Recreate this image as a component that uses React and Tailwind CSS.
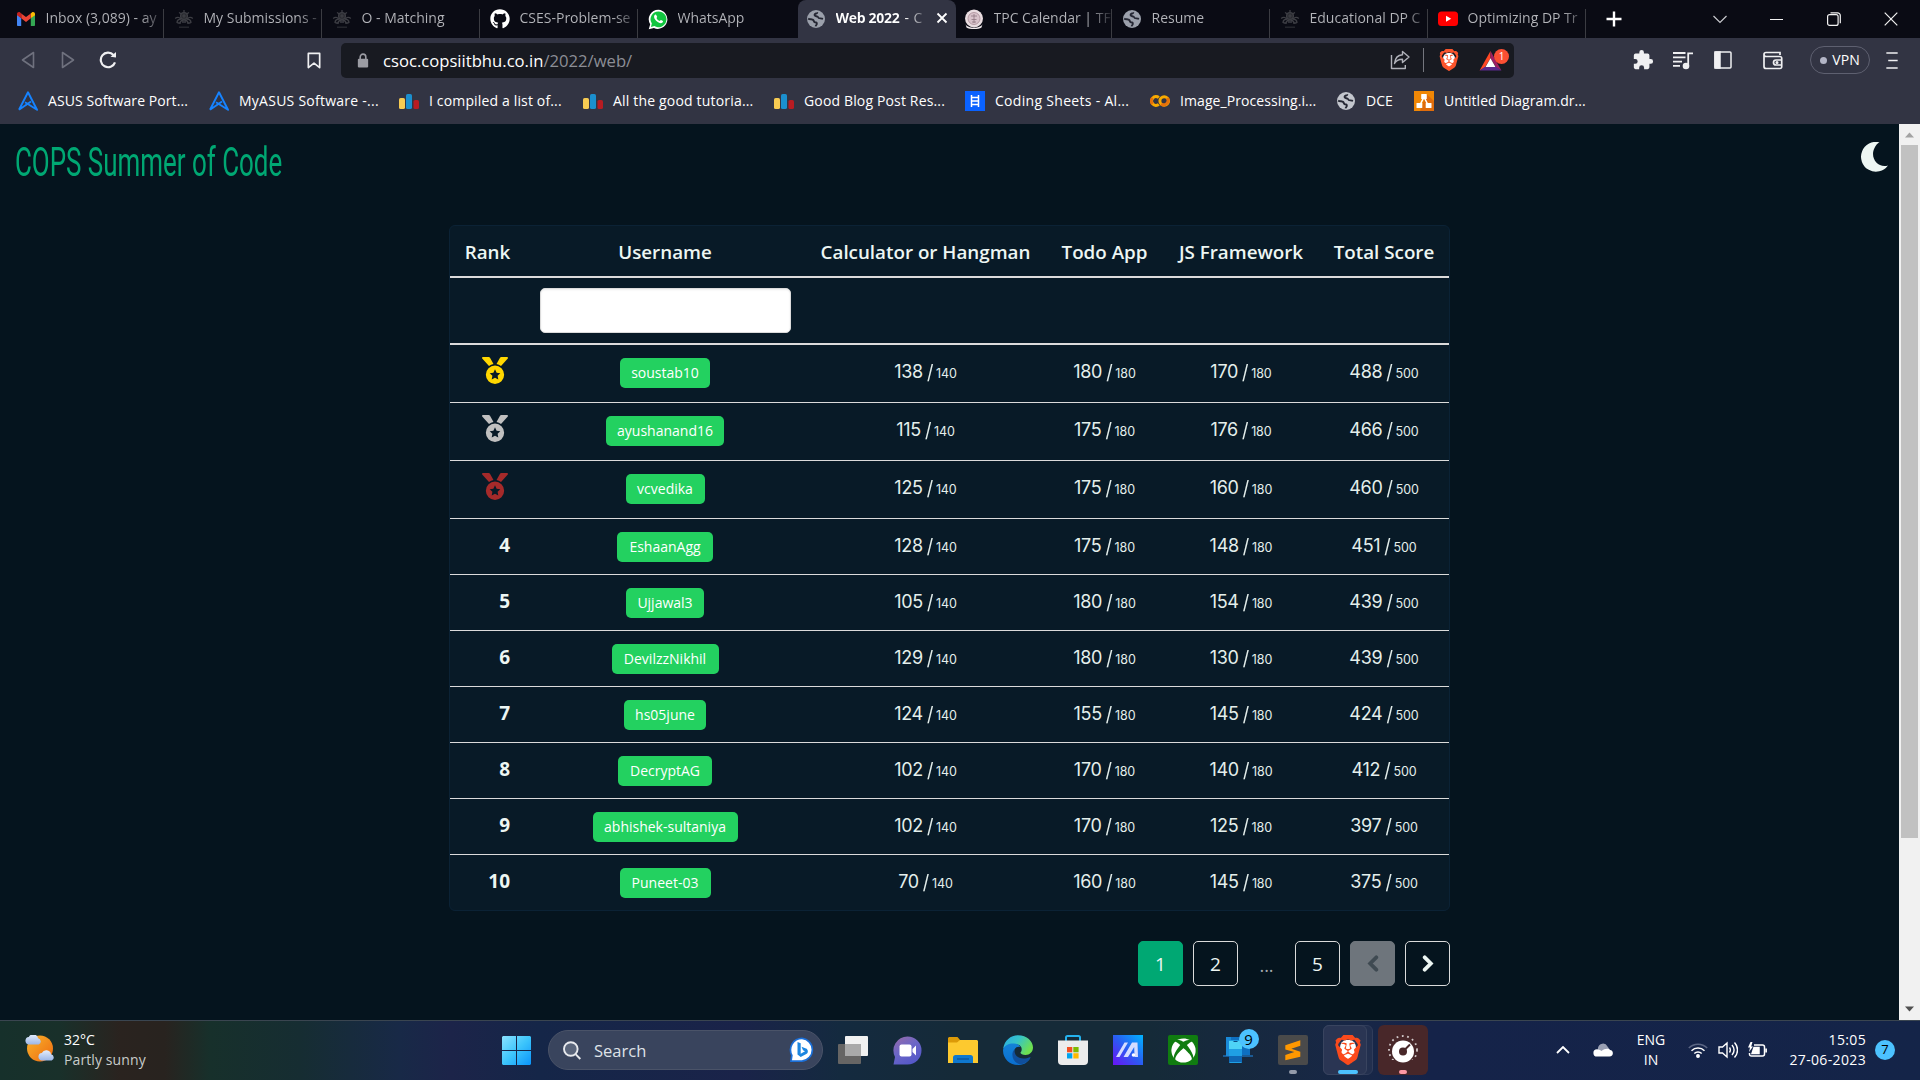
import React from "react";
import { FaGithub, FaXbox } from "react-icons/fa";
import { SiBrave } from "react-icons/si";

const Globe = ({ className = "text-[#9ba0ab]" }) => (
  <svg viewBox="0 0 20 20" className={"size-5 " + className}>
    <circle cx="10" cy="10" r="9" fill="currentColor" />
    <path d="M2.200 9.500c1.500 1.500 3 .3 4.500 1.200 1.600.9.800 2.300 2.300 2.600 1.500.2 2 .4 1.800 1.700-.1.900-1 1.200-1.200 2.400M11.300 3.200c.3 1.600-2.800 1-2.800 2.800 0 1.700 3.300.7 3.700 2.400.3 1.400 2.500.6 4.800 1.400" fill="none" stroke="#252733" strokeWidth="1.900" />
  </svg>
);

const Crest = () => (
  <svg viewBox="0 0 20 20" className="size-5" fill="none" stroke="#3d3e44" strokeWidth="1.300">
    <circle cx="10" cy="7" r="3.400" fill="#2a2b31" />
    <circle cx="10" cy="7" r="1" />
    <path d="M10 1v3M5 3.500l2.500 1.500M15 3.500l-2.500 1.500M1.200 9.500c2-1.800 4-1.200 5.200.3M18.800 9.500c-2-1.800-4-1.200-5.200.3M3 14c0-3 2-4 4.500-4M17 14c0-3-2-4-4.500-4M6 15c0-3 2-4 4-4s4 1 4 4M3.500 14h3M13.500 14h3M8 13h4" />
    <path d="M5 18.200h10" stroke="#2a2b31" />
  </svg>
);

const Gmail = () => (
  <svg viewBox="0 0 20 20" className="size-5">
    <path d="M1 5v11c0 .6.500 1 1 1h3.200V9z" fill="#4285f4" />
    <path d="M19 5v11c0 .6-.5 1-1 1h-3.200V9z" fill="#34a853" />
    <path d="M14.800 4.600V9.300L19 6.200V5c0-1.800-1.900-2.600-3.200-1.500z" fill="#fbbc04" />
    <path d="M5.200 9.300V4.500L10 8.100l4.800-3.600v4.800L10 12.900z" fill="#ea4335" />
    <path d="M1 5v1.200l4.200 3.100V4.600L4.200 3.500C2.900 2.400 1 3.200 1 5z" fill="#c5221f" />
  </svg>
);

const WhatsApp = () => (
  <svg viewBox="0 0 22 22" className="size-[21px]">
    <path d="M11 .8A10 10 0 0 0 2.300 16L.8 21.300l5.400-1.400A10 10 0 1 0 11 .8z" fill="#fff" />
    <path d="M11 2.500a8.300 8.300 0 0 0-7 12.800l-.9 3.500 3.600-.9A8.300 8.300 0 1 0 11 2.500z" fill="#12c640" />
    <path d="M8.600 6.300c-.4-.8-1.100-.6-1.600 0-1.800 2.200.6 5.200 2.200 6.600 1.800 1.600 4.400 2.900 6 1.300.9-1 .6-1.400 0-1.800l-1.600-.8c-.5-.2-.9 1-1.400.9-1.400-.4-2.700-1.700-3.200-2.900-.2-.5.800-1 .6-1.500z" fill="#fff" />
  </svg>
);

const Seal = () => (
  <svg viewBox="0 0 20 20" className="size-5">
    <circle cx="10" cy="9.500" r="9" fill="#e9dce0" />
    <circle cx="10" cy="9.500" r="6" fill="#d8c2ca" stroke="#a98d97" strokeWidth=".8" />
    <path d="M10 5v9M7 7h6M7.500 10.500h5M8 13h4" stroke="#8f7682" strokeWidth=".8" />
    <path d="M1.500 15c2 5 15 5 17 0l-1 3.500c-3 2-12 2-15 0z" fill="#f4ecef" />
  </svg>
);

const YouTube = () => (
  <svg viewBox="0 0 20 20" className="size-5">
    <rect x="0" y="2.500" width="20" height="14.500" rx="3.500" fill="#f00" />
    <path d="M8 6.700v6l5.200-3z" fill="#fff" />
  </svg>
);

const tabs = [
  { icon: <Gmail />, text: "Inbox (3,089) - ay" },
  { icon: <Crest />, text: "My Submissions -" },
  { icon: <Crest />, text: "O - Matching" },
  { icon: <FaGithub className="size-5 text-white" />, text: "CSES-Problem-se" },
  { icon: <WhatsApp />, text: "WhatsApp" },
  { icon: <Globe />, text: "Web 2022", rest: "- C", active: true },
  { icon: <Seal />, text: "TPC Calendar | TF" },
  { icon: <Globe />, text: "Resume" },
  { icon: <Crest />, text: "Educational DP C" },
  { icon: <YouTube />, text: "Optimizing DP Tr" },
];

const Asus = () => (
  <svg viewBox="0 0 20 20" className="size-5" fill="none" stroke="#1683ff" strokeWidth="1.900" strokeLinejoin="round">
    <path d="M1 18.800 10 1.300l9 17.500-12-7.600M1 18.800l12-8.300" />
  </svg>
);
const Bars = () => (
  <svg viewBox="0 0 20 20" className="size-5">
    <rect x="0" y="7" width="6" height="11" rx="1.600" fill="#f7cb52" />
    <rect x="7" y="3" width="6" height="15" rx="1.600" fill="#1b8fce" />
    <rect x="14.500" y="9" width="5.500" height="9" rx="1.600" fill="#b71c22" />
  </svg>
);
const Ladder = () => (
  <svg viewBox="0 0 20 20" className="size-5">
    <path d="M0 0h20v20H0z" fill="#0a62ff" />
    <path d="M6.500 4v12M13.500 4v12M6.500 6.500h7M6.500 10h7M6.500 13.500h7" stroke="#fff" strokeWidth="1.500" />
  </svg>
);
const Colab = () => (
  <svg viewBox="0 0 20 20" className="size-5" fill="none" strokeWidth="3">
    <path d="M8.800 6.600a4.400 4.400 0 1 0 0 6.800" stroke="#f9ab00" />
    <circle cx="14.200" cy="10" r="4.300" stroke="#f9ab00" />
    <path d="M11.200 13a4.300 4.300 0 0 0 6-6" stroke="#e8710a" />
    <path d="M2.600 7a4.300 4.300 0 0 0 0 6" stroke="#e8710a" />
  </svg>
);
const Drawio = () => (
  <svg viewBox="0 0 20 20" className="size-5">
    <path d="M0 0h20v20H0z" fill="#f08705" />
    <path d="M12.500 3 20 10v10H6z" fill="#df6c0c" />
    <path d="m10 6-4 8M10 6l4 8" stroke="#fff" strokeWidth="1.600" />
    <rect x="7.200" y="3" width="5.600" height="5" rx=".6" fill="#fff" />
    <rect x="2.500" y="12" width="5.800" height="5" rx=".6" fill="#fff" />
    <rect x="11.700" y="12" width="5.800" height="5" rx=".6" fill="#fff" />
  </svg>
);

/* Orange shield with a white face behind the lion's cut-outs. */
const Brave = ({ small }) => (
  <span className={"relative flex items-center justify-center " + (small ? "size-[22px]" : "size-[30px]")}>
    <span className={"absolute rounded-[40%] bg-white " + (small ? "h-3.5 w-3" : "h-5 w-4")} />
    <SiBrave className={"relative " + (small ? "size-[22px] text-[#fb542b]" : "size-[30px] text-[#fb4a1c]")} />
  </span>
);

const bookmarks = [
  { icon: <Asus />, text: "ASUS Software Port...", w: "w-[191px] tracking-[0.08px]" },
  { icon: <Asus />, text: "MyASUS Software -...", w: "w-[190px] tracking-[0.25px]" },
  { icon: <Bars />, text: "I compiled a list of...", w: "w-[184px] tracking-[0.15px]" },
  { icon: <Bars />, text: "All the good tutoria...", w: "w-[191px] tracking-[0.18px]" },
  { icon: <Bars />, text: "Good Blog Post Res...", w: "w-[191px] tracking-[0.15px]" },
  { icon: <Ladder />, text: "Coding Sheets - Al...", w: "w-[185px] tracking-[0.3px]" },
  { icon: <Colab />, text: "Image_Processing.i...", w: "w-[186px] tracking-[0.08px]" },
  { icon: <Globe className="text-[#c3c6cd]" />, text: "DCE", w: "w-[78px]" },
  { icon: <Drawio />, text: "Untitled Diagram.dr...", w: "w-[180px] tracking-[0.06px]" },
];

function TabBar() {
  return (
    <div className="flex h-[38px] items-end bg-[#0a0b14] pl-2">
      {tabs.map((t, i) => (
        <div
          key={i}
          className={
            "relative flex h-[38px] w-[158px] shrink-0 items-center pb-0.5 pl-2 " +
            (t.active ? "rounded-t-lg bg-[#323443]" : "")
          }
        >
          <span className="flex w-[29.500px] shrink-0 pt-0.5">{t.icon}</span>
          <span
            className={
              "whitespace-nowrap text-[14px] leading-5 " +
              (t.active
                ? "w-[94px] bg-linear-to-r from-white from-75% to-transparent bg-clip-text font-bold tracking-[-0.3px] text-transparent"
                : "w-[118px] bg-linear-to-r from-[#b4b5ba] from-80% to-[#b4b5ba]/10 bg-clip-text text-transparent")
            }
          >
            {t.text}
            {t.rest && <span className="ml-[5px] font-normal tracking-[0.5px]">{t.rest}</span>}
          </span>
          {t.active && (
            <svg viewBox="0 0 12 12" className="ml-1.5 size-3 shrink-0" stroke="#fff" strokeWidth="1.800">
              <path d="m1.500 1.500 9 9m0-9-9 9" />
            </svg>
          )}
          {i !== 4 && i !== 5 && <span className="absolute right-0.5 bottom-0 h-[29px] w-px bg-[#3b3c42]" />}
        </div>
      ))}
      <div className="flex h-[38px] flex-1 items-center">
        <svg viewBox="0 0 16 16" className="ml-[18px] size-4" stroke="#fff" strokeWidth="2.400">
          <path d="M8 .5v15M.5 8h15" />
        </svg>
        <svg viewBox="0 0 14 14" className="ml-[91px] size-3.5" fill="none" stroke="#c9cace" strokeWidth="1.200">
          <path d="m.5 4 6.500 6.500L13.500 4" />
        </svg>
        <span className="ml-[43px] h-px w-[13px] bg-[#f2f2f2]" />
        <svg viewBox="0 0 14 14" className="ml-11 size-3.5" fill="none" stroke="#f2f2f2" strokeWidth="1.200">
          <rect x=".6" y="2.600" width="10.500" height="10.800" rx="2" />
          <path d="M3.500.8h7a2.800 2.800 0 0 1 2.800 2.800v7.600" />
        </svg>
        <svg viewBox="0 0 14 14" className="ml-[43px] size-3.5" fill="none" stroke="#f2f2f2" strokeWidth="1.200">
          <path d="m.7.7 12.600 12.600m0-12.600L.7 13.300" />
        </svg>
      </div>
    </div>
  );
}

function Toolbar() {
  return (
    <div className="flex h-[44px] items-center">
      <svg viewBox="0 0 14 18" className="ml-[21px] h-[18px] w-3.5" fill="none" stroke="#6f717e" strokeWidth="1.600" strokeLinejoin="round">
        <path d="M12.500 1.500v15L1.500 9z" />
      </svg>
      <svg viewBox="0 0 14 18" className="ml-[26px] h-[18px] w-3.5" fill="none" stroke="#6f717e" strokeWidth="1.600" strokeLinejoin="round">
        <path d="M1.500 1.500v15l11-7.500z" />
      </svg>
      <svg viewBox="0 0 18 18" className="ml-[24px] size-[18px]" fill="none" stroke="#f0f0f2" strokeWidth="2.200">
        <path d="M16 11.300A7.300 7.300 0 1 1 14.500 4" />
        <path d="M11.500 5.800 17 6.500V1z" fill="#f0f0f2" stroke="none" />
      </svg>
      <svg viewBox="0 0 14 18" className="ml-[190px] h-[17px] w-3.5" fill="none" stroke="#f0f0f2" strokeWidth="1.800" strokeLinejoin="round">
        <path d="M1 1.500h12v15l-6-4.800-6 4.800z" />
      </svg>
      <div className="ml-5 flex h-[35px] w-[1173px] items-center rounded-[5px] bg-[#181a21]">
        <svg viewBox="0 0 12 16" className="ml-4 h-[15px] w-[12px]">
          <rect x=".5" y="6" width="11" height="9.500" rx="1.200" fill="#9b9ca3" />
          <path d="M3 6.500V4.200a3 3 0 0 1 6 0v2.300" fill="none" stroke="#9b9ca3" strokeWidth="1.700" />
        </svg>
        <span className="ml-3.5 w-[1007px] pt-0.5 text-[16.650px] whitespace-nowrap text-[#8c8e96]">
          <span className="text-white">csoc.copsiitbhu.co.in</span>/2022/web/
        </span>
        <svg viewBox="0 0 20 20" className="size-5" fill="none" stroke="#b0b2ba" strokeWidth="1.400" strokeLinejoin="round">
          <path d="M1.500 5v13.500h13.800V15" />
          <path d="M12.500 1.500 19 7l-6.500 5.500V9.300C8.500 9.300 6 10.500 4.500 13.500 5 8.500 8 5 12.500 4.700z" />
        </svg>
        <span className="mr-3.5 ml-[13px] h-6 w-px bg-[#74767e]" />
        <Brave small />
        <div className="relative ml-[19px] flex h-[22px] w-6 items-end">
          <svg viewBox="0 0 24 22" className="h-[20px] w-[23px]">
            <path d="M12 0 0 21.500l5.500-3L12 8z" fill="#ff4724" />
            <path d="m12 0 12 21.500-5.500-3L12 8z" fill="#9e1f63" />
            <path d="M0 21.500h24l-5.500-4h-13z" fill="#5b2a8c" />
            <path d="m12 8 5.500 9.500h-11z" fill="#fff" />
          </svg>
          <span className="absolute top-0 left-[15px] flex size-[15px] items-center justify-center rounded-full bg-[#fb4f33] text-[10px] text-white">1</span>
        </div>
      </div>
      <svg viewBox="0 0 24 24" className="ml-[118px] size-[22px]" fill="#f0f0f2">
        <path d="M20.500 11H19V7a2 2 0 0 0-2-2h-4V3.500a2.500 2.500 0 0 0-5 0V5H4a2 2 0 0 0-2 2v3.800h1.500a2.700 2.700 0 0 1 0 5.400H2V20c0 1.100.9 2 2 2h3.800v-1.500a2.700 2.700 0 0 1 5.400 0V22H17a2 2 0 0 0 2-2v-4h1.500a2.500 2.500 0 0 0 0-5z" />
      </svg>
      <svg viewBox="0 0 20 18" className="ml-[19px] h-[19px] w-5" fill="none" stroke="#f0f0f2" strokeWidth="1.800">
        <path d="M0 1.500h12.500M0 5.800h12.500M0 10.100h9M0 14.400h7M15.200 15V1.800H20" />
        <circle cx="13" cy="14.500" r="2.400" fill="#f0f0f2" />
      </svg>
      <svg viewBox="0 0 18 18" className="ml-[21px] size-[18px]" fill="none" stroke="#f0f0f2" strokeWidth="1.500">
        <rect x="1" y="1" width="16" height="16" rx="1" />
        <path d="M1 1h5v16H1z" fill="#f0f0f2" />
      </svg>
      <svg viewBox="0 0 20 18" className="ml-[31px] h-[19px] w-5" fill="none" stroke="#f0f0f2" strokeWidth="1.700">
        <path d="M17 3.500V1H3a2 2 0 0 0 0 4h14a1.700 1.700 0 0 1 1.700 1.700v8.500A1.700 1.700 0 0 1 17 17H3a2 2 0 0 1-2-2V3M19 8.500h-6a2.500 2.500 0 0 0 0 5h6" />
        <circle cx="14" cy="11" r=".7" fill="#f0f0f2" />
      </svg>
      <div className="ml-[27px] flex h-7 w-[60px] items-center justify-center gap-[5px] rounded-full border border-[#5e6070] text-[14px] text-white">
        <span className="size-[7px] rounded-full bg-[#b3b5c6]" />
        <span className="pb-px tracking-[0.1px]">VPN</span>
      </div>
      <svg viewBox="0 0 12 18" className="ml-[16px] h-[17px] w-3" stroke="#f0f0f2" strokeWidth="1.700">
        <path d="M0 1h12M2 9h10M0 17h12" />
      </svg>
    </div>
  );
}

function Bookmarks() {
  return (
    <div className="flex h-[38px] items-center pl-[18px] text-[14px] text-white">
      {bookmarks.map((b, i) => (
        <div key={i} className={"flex items-center gap-2.5 whitespace-nowrap " + b.w}>
          {b.icon}
          <span className="pb-0.5">{b.text}</span>
        </div>
      ))}
    </div>
  );
}

const Medal = ({ color }) => (
  <svg viewBox="0 0 26 27" className={"h-[27px] w-[26px] " + color} fill="currentColor">
    <path d="M0 .9C0 .3.300 0 .9 0h5.800c.6 0 1 .2 1.300.7l3.500 6.200c-1.700.4-3.200 1.100-4.500 2.200L.2 1.500zM26 .9c0-.6-.3-.9-.9-.9h-5.800c-.6 0-1 .2-1.300.7l-3.500 6.200c1.700.4 3.200 1.100 4.500 2.200l6.800-7.600z" />
    <path fillRule="evenodd" d="M13 8.600a9.100 9.100 0 1 0 0 18.300 9.100 9.100 0 0 0 0-18.300zm0 3.700 1.600 3.400 3.700.5-2.700 2.600.7 3.700-3.300-1.800-3.300 1.800.7-3.700-2.700-2.600 3.700-.5z" />
  </svg>
);

const rows = [
  ["text-[#ffd700]", "soustab10", "w-[90px]", 138, 180, 170, 488],
  ["text-[#c0c0c0]", "ayushanand16", "w-[118px]", 115, 175, 176, 466],
  ["text-[#a52a2a]", "vcvedika", "w-[79px]", 125, 175, 160, 460],
  [4, "EshaanAgg", "w-[96px]", 128, 175, 148, 451],
  [5, "Ujjawal3", "w-[78px]", 105, 180, 154, 439],
  [6, "DevilzzNikhil", "w-[107px]", 129, 180, 130, 439],
  [7, "hs05june", "w-[82px]", 124, 155, 145, 424],
  [8, "DecryptAG", "w-[94px]", 102, 170, 140, 412],
  [9, "abhishek-sultaniya", "w-[145px]", 102, 170, 125, 397],
  [10, "Puneet-03", "w-[91px]", 70, 160, 145, 375],
];

const cols = "grid grid-cols-[75px_280px_241px_117px_156px_130px]";

const Score = ({ value, max }) => (
  <div className="pt-3 text-center font-['Inter'] text-[18px] leading-[30px] tracking-[-0.3px] whitespace-nowrap text-[#e4efec]">
    {value}
    <span className="ml-1 mr-[3px] inline-block scale-y-110">/</span>
    <span className="text-[12.500px] tracking-[-0.1px]">{max}</span>
  </div>
);

function Board() {
  return (
    <div className="w-[1001px] rounded-[6px] border border-[#0b2235] bg-[#081a27]">
      <div className={cols + " h-[52px] border-b-2 border-[#dbdbdb] text-center text-[18.800px] leading-[53px] font-semibold whitespace-nowrap text-[#edf6f3]"}>
        {["Rank", "Username", "Calculator or Hangman", "Todo App", "JS Framework", "Total Score"].map((h) => (
          <div key={h} className="h-[50px]">{h}</div>
        ))}
      </div>
      <div className={cols + " h-[67px] border-b-2 border-[#dbdbdb]"}>
        <div />
        <input className="mt-[10px] ml-[15px] h-[45px] w-[251px] rounded-[5px] border border-[#dbdbdb] bg-white shadow-[inset_0_1px_2px_rgba(10,10,10,0.08)]" />
      </div>
      {rows.map(([rank, name, w, a, b, c, d], i) => (
        <div
          key={name}
          className={cols + " " + (i < 3 ? "h-[58px]" : i < 9 ? "h-[56px]" : "h-[55px]") + (i < 9 ? " border-b border-[#dbdbdb]" : "")}
        >
          {i < 3 ? (
            <div className="pt-3 pl-[32px]"><Medal color={rank} /></div>
          ) : (
            <div className="pt-[11px] pr-[15px] text-right text-[19px] leading-[30px] font-bold text-[#edf6f3]">{rank}</div>
          )}
          <div className="flex justify-center pt-[13px]">
            <span className={"flex h-[30px] items-center justify-center rounded-[5px] bg-[#23d160] pb-0.5 text-[14px] text-white " + w}>{name}</span>
          </div>
          <Score value={a} max={140} />
          <Score value={b} max={180} />
          <Score value={c} max={180} />
          <Score value={d} max={500} />
        </div>
      ))}
    </div>
  );
}

function Pager() {
  const box = "flex size-[45px] items-center justify-center rounded-[5px] border text-[19px] ";
  return (
    <div className="mt-[30px] flex w-[1001px] justify-end gap-2.5 text-[#edf6f3]">
      <div className={box + "border-[#00a873] bg-[#00a873] pt-0.5"}>1</div>
      <div className={box + "border-[#dbdbdb] pt-0.5"}>2</div>
      <div className="flex w-[37px] items-center justify-center pt-1 text-[18px] text-[#a3a8ab]">...</div>
      <div className={box + "border-[#dbdbdb] pt-0.5"}>5</div>
      <div className={box + "border-[#6e757c] bg-[#6e757c]"}>
        <svg viewBox="0 0 12 18" className="h-[17px] w-3" fill="none" stroke="#3f4a52" strokeWidth="4" strokeLinecap="round">
          <path d="M9.500 2.500 3 9l6.500 6.500" />
        </svg>
      </div>
      <div className={box + "border-[#dbdbdb]"}>
        <svg viewBox="0 0 12 18" className="h-[17px] w-3" fill="none" stroke="#edf6f3" strokeWidth="4" strokeLinecap="round">
          <path d="M2.500 2.500 9 9l-6.500 6.500" />
        </svg>
      </div>
    </div>
  );
}

function Page() {
  return (
    <div className="flex h-[896px] bg-[#05141e]">
      <div className="flex flex-1 flex-col items-center">
        <div className="flex h-[101px] w-full shrink-0 items-start justify-between pr-[11px] pl-[15px]">
          <h1 className="h-[60px] w-[266px] whitespace-nowrap">
            <span className="inline-block origin-left scale-x-[0.648] pt-[15px] font-['Roboto'] text-[40px] leading-[48px] text-[#00a873]">COPS Summer of Code</span>
          </h1>
          <svg viewBox="0 0 27 30" className="mt-[18px] h-[30px] w-[27px]" fill="#edf6f3">
            <path d="M18.500.3A14.900 14.900 0 1 0 27 23.500C17 26.500 8.500 16 13.500 6 14.500 3.500 16.500 1.500 18.500.3z" />
          </svg>
        </div>
        <Board />
        <Pager />
      </div>
      <div className="flex w-[21px] flex-col items-center bg-[#f1f1f1]">
        <svg viewBox="0 0 21 21" className="size-[21px]"><path d="m6 13.500 4.500-5 4.500 5z" fill="#a3a3a3" /></svg>
        <div className="h-[693px] w-[17px] bg-[#c1c1c1]" />
        <svg viewBox="0 0 21 21" className="mt-auto size-[21px]"><path d="m6 7.500 4.500 5 4.500-5z" fill="#505050" /></svg>
      </div>
    </div>
  );
}

const Weather = () => (
  <svg viewBox="0 0 30 30" className="size-[30px]">
    <defs>
      <linearGradient id="sun" x1="0" y1="0" x2="1" y2="1"><stop stopColor="#f9b42a" /><stop offset="1" stopColor="#ee6a11" /></linearGradient>
      <linearGradient id="cloud" x1="0" y1="0" x2="0" y2="1"><stop stopColor="#e4edfb" /><stop offset="1" stopColor="#9cb7e8" /></linearGradient>
    </defs>
    <circle cx="15" cy="13.500" r="13" fill="url(#sun)" />
    <path d="M3.500 9.500a3.800 3.800 0 0 1 .3-7.500 5 5 0 0 1 9.300 1.200 3.300 3.300 0 0 1 .6 6.300z" fill="url(#cloud)" />
    <path d="M16.500 25.500a3.800 3.800 0 0 1 .3-7.500 5 5 0 0 1 9.300 1.200 3.300 3.300 0 0 1 .6 6.300z" fill="url(#cloud)" />
  </svg>
);

const Windows = () => (
  <svg viewBox="0 0 29 29" className="size-[29px]">
    <defs><linearGradient id="win" x1="0" y1="0" x2="1" y2="1"><stop stopColor="#8be2ff" /><stop offset=".5" stopColor="#3dc5fb" /><stop offset="1" stopColor="#0a94fb" /></linearGradient></defs>
    <path d="M1 0h13v14H0V1zM15 0h13l1 1v13H15zM0 15h14v14H1l-1-1zM15 15h14v13l-1 1H15z" fill="url(#win)" />
  </svg>
);

const Bing = () => (
  <svg viewBox="0 0 26 26" className="size-[26px] shrink-0">
    <path d="M13 .5a12.300 12.300 0 0 0-11 18L1 25h12A12.300 12.300 0 0 0 13 .5z" fill="#1b6fd8" />
    <path d="M13 2.200a10.700 10.700 0 0 0-9.300 16L3 23.300h10a10.600 10.600 0 0 0 0-21.100z" fill="#fff" />
    <path d="M8.500 5v12.500l3.200 2.500 6-3.300c2-1.400 1.200-4.600-.7-5.300l-4.500-1.600 1.500 3.500 2 1-4.300 2.500V6.300z" fill="#1c86e0" />
  </svg>
);

const TaskView = () => (
  <svg viewBox="0 0 30 28" className="h-7 w-[30px]">
    <rect y="8" width="23" height="20" rx="1" fill="#666564" />
    <rect x="7" width="23" height="20" rx="1" fill="#f1f1f1" />
    <rect x="7" y="8" width="16" height="12" fill="#a9a9a9" />
  </svg>
);

const Chat = () => (
  <svg viewBox="0 0 30 29" className="h-[29px] w-[30px]">
    <defs><linearGradient id="chat" x1="0" y1="0" x2=".6" y2="1"><stop stopColor="#9a6ba6" /><stop offset=".5" stopColor="#6c66c6" /><stop offset="1" stopColor="#5558c9" /></linearGradient></defs>
    <path d="M14.500.500A14 14 0 0 0 2 21L.5 28.500h14a14 14 0 0 0 0-28z" fill="url(#chat)" />
    <rect x="6.500" y="8.500" width="12" height="12" rx="2" fill="#fff" />
    <path d="m19.500 13 3.500-3.500v10L19.500 16z" fill="#fff" />
  </svg>
);

const Folder = () => (
  <svg viewBox="0 0 30 28" className="h-7 w-[30px]">
    <path d="M1 1h8.500l3 3.500V9H0V2z" fill="#dc9a08" />
    <path d="M0 6.500h9l3-2.500h17l1 1v22H0z" fill="#fdc92f" />
    <path d="M5 27v-5.500c0-1.500 1-2.500 2.500-2.500h15c1.500 0 2.500 1 2.500 2.500V27z" fill="#0f78cf" />
    <path d="M9 23h12" stroke="#0a4f95" strokeWidth="1.200" />
  </svg>
);

const Edge = () => (
  <svg viewBox="0 0 30 30" className="size-[30px]">
    <defs>
      <linearGradient id="edgeTop" x1="0" y1="0" x2="1" y2=".5"><stop stopColor="#2aa9e6" /><stop offset=".5" stopColor="#36c4c8" /><stop offset="1" stopColor="#6ee04f" /></linearGradient>
      <linearGradient id="edgeLow" x1="0" y1="0" x2="0" y2="1"><stop stopColor="#1482d8" /><stop offset="1" stopColor="#0a6fd0" /></linearGradient>
    </defs>
    <path d="M.2 13.500C1.500 5.500 7.500.2 15 .2c9 0 15 6 15 12.300 0 4.300-3.200 7.500-7.500 7.500-3 0-5-1.200-5-2.200 0-.6 1.200-1.200 1.200-3.600 0-3-2.500-5-6-5-6 0-9.500 3-12.500 4.300z" fill="url(#edgeTop)" />
    <path d="M.1 14.500C1.500 10 6.500 8.200 11 8.500c3 .2 5.500 1.600 6.500 3.500-3-1-6.500 1-6.500 5 0 5 5 8 9.500 8 3 0 5-1 7-2.500C25 27.500 20.500 30 15 30 6.500 30-.6 23 .1 14.500z" fill="url(#edgeLow)" />
    <path d="M11.500 14.500c-4 3.500-2.500 12.500 5.500 15 4.500-.5 8-3 10.300-6.600.3-.6-.2-.9-.8-.6C21 25 11 24 11.500 14.500z" fill="#104f9c" />
  </svg>
);

const Store = () => (
  <svg viewBox="0 0 30 30" className="size-[30px]">
    <path d="M8 7V2.500C8 1.500 8.500 1 9.500 1h11c1 0 1.500.5 1.500 1.500V7" fill="none" stroke="#24b2ee" strokeWidth="2" />
    <path d="M0 5.500h30V26a4 4 0 0 1-4 4H4a4 4 0 0 1-4-4z" fill="#ececec" />
    <path d="M9 12h5.300v5.300H9z" fill="#f25022" /><path d="M15.300 12h5.300v5.300h-5.300z" fill="#7fba00" />
    <path d="M9 18.200h5.300v5.300H9z" fill="#00a4ef" /><path d="M15.300 18.200h5.300v5.300h-5.300z" fill="#ffb900" />
  </svg>
);

const MyAsus = () => (
  <svg viewBox="0 0 30 30" className="size-[30px]">
    <defs><linearGradient id="mya" x1="0" y1="1" x2="1" y2="0"><stop stopColor="#6b12f5" /><stop offset=".5" stopColor="#2a5cf2" /><stop offset="1" stopColor="#00b5ff" /></linearGradient></defs>
    <path d="M0 0h30v30H0z" fill="url(#mya)" />
    <path d="m3 22 8.500-14.500h3.500L6.500 22zM10.500 22 19 7.500h5.500L25 22h-3.500l-.3-10L15 22z" fill="#d5dcff" />
    <circle cx="20.500" cy="20" r="1.800" fill="#fff" />
  </svg>
);

const Xbox = () => (
  <div className="flex size-[30px] items-center justify-center rounded-[2px] bg-[#107c10]">
    <FaXbox className="size-[25px] text-white" />
  </div>
);

const Phone = () => (
  <div className="relative size-[30px]">
    <svg viewBox="0 0 30 30" className="size-[30px]">
      <path d="M3 2h24v19H3z" fill="#0e6fc0" />
      <path d="M0 20h30v2H0z" fill="#1b5a94" />
      <path d="M3 2h5v19H3z" fill="#1a8ad8" />
      <rect x="6" y="5" width="13" height="23" rx="1" fill="#1f9fe4" />
      <path d="M6 6h13v8H6z" fill="#4fd3f6" />
      <path d="M6 21h13v6H6z" fill="#0f67b5" />
      <path d="M10.500 6.500h4" stroke="#0a4a85" />
    </svg>
    <span className="absolute -top-1.5 left-[15.500px] flex size-5 items-center justify-center rounded-full bg-[#4cc2ff] text-[15px] text-black">9</span>
  </div>
);

const Sublime = () => (
  <svg viewBox="0 0 30 30" className="size-[30px]">
    <rect width="30" height="30" rx="2" fill="#4a4a4a" />
    <path d="m7.300 10.200 15-5v5.500l-9 3.100 9 2.900v5L7.300 25.300v-5.400l9-3-9-2.400z" fill="#ff9800" />
  </svg>
);

const Gauge = () => (
  <svg viewBox="0 0 30 30" className="size-[30px]">
    <circle cx="15" cy="15" r="14" fill="none" stroke="#fff" strokeWidth="1.800" strokeDasharray="1.800 3.600" pathLength="88" strokeOpacity=".75" />
    <path d="M4 25h22v5H4z" fill="#482729" />
    <circle cx="15" cy="16.500" r="11" fill="#fff" />
    <circle cx="15" cy="16.500" r="4" fill="#482729" />
    <path d="m16 15.500 6-6" stroke="#482729" strokeWidth="2" />
  </svg>
);

function Taskbar() {
  return (
    <div className="flex h-[60px] items-center border-t border-[#3a4550] bg-[linear-gradient(90deg,#16302b_0px,#19302a_60px,#2a231f_120px,#28231f_165px,#17302b_210px,#162d32_300px,#182947_400px,#1c2449_450px,#152648_540px,#1a2349_740px,#142a3f_840px,#152a38_960px,#152a38_1150px,#182746_1350px,#152349_1430px,#142448_1920px)] pb-px">
      <div className="ml-[25px] flex w-[477px] items-center gap-[9px]">
        <Weather />
        <div className="pb-px text-[14px] leading-5 text-white">
          <div>32°C</div>
          <div className="tracking-[0.1px] text-[#c8cccb]">Partly sunny</div>
        </div>
      </div>
      <Windows />
      <div className="ml-[17px] flex h-10 w-[275px] items-center rounded-full border border-[#4a5368] bg-[#39445d]">
        <svg viewBox="0 0 18 19" className="ml-3.5 h-[19px] w-[18px]" fill="#5a657b" stroke="#e8eaee" strokeWidth="1.900">
          <circle cx="7.800" cy="8" r="6.800" /><path d="m12.800 13.300 4.500 4.700" />
        </svg>
        <span className="ml-[13px] w-[195px] pt-0.5 text-[16.500px] text-[#dfe2e8]">Search</span>
        <Bing />
      </div>
      <div className="ml-[15px] flex items-center gap-[25px]">
        <TaskView /><Chat /><Folder /><Edge /><Store /><MyAsus /><Xbox /><Phone />
        <div className="relative">
          <Sublime />
          <span className="absolute top-[35px] left-[11px] h-1 w-2 rounded-full bg-[#949baa]" />
        </div>
      </div>
      <div className="relative ml-[15px] flex h-[50px] w-[50px] items-center rounded-md border border-[#303c5a] bg-[#222f4e]">
        <span className="-ml-px flex h-[50px] w-11 items-center justify-center rounded-md border border-[#39445f] bg-[#2a3553] pl-1.5">
          <Brave />
        </span>
        <span className="absolute bottom-0 left-3.5 h-1 w-5 rounded-full bg-[#4cc2ff]" />
      </div>
      <div className="relative ml-[5px] flex size-[50px] items-center justify-center rounded-md bg-[#482729]">
        <Gauge />
        <span className="absolute bottom-px left-[21px] h-1 w-2 rounded-full bg-[#ff99a4]" />
      </div>
      <svg viewBox="0 0 14 8" className="ml-[128px] h-2 w-3.5" fill="none" stroke="#fff" strokeWidth="1.800"><path d="m1 7 6-6 6 6" /></svg>
      <svg viewBox="0 0 20 14" className="ml-[23px] h-3.5 w-5">
        <path d="M5 5a5 5 0 0 1 9.500-1.500L17 7l-13 3z" fill="#9aa0b3" />
        <path d="M4 13.500a3.600 3.600 0 0 1 0-7.200c1.500 0 3 .8 4.500 1.700 3-2.500 7-3 8.500-1 4 .3 3.800 6.500-.5 6.500z" fill="#fff" />
      </svg>
      <div className="ml-[20px] w-[36px] text-center text-[14px] leading-5 text-white"><div>ENG</div><div>IN</div></div>
      <svg viewBox="0 0 20 16" className="ml-[19px] h-4 w-5" fill="none" stroke="#fff" strokeWidth="1.500">
        <path d="M.8 6a13 13 0 0 1 18.400 0" stroke="#5b6684" />
        <path d="M3.500 8.800a9.200 9.200 0 0 1 13 0M6.300 11.500a5.300 5.300 0 0 1 7.400 0" />
        <circle cx="10" cy="14" r="1.200" fill="#fff" />
      </svg>
      <svg viewBox="0 0 20 18" className="ml-2.5 h-[18px] w-5" fill="none" stroke="#fff" strokeWidth="1.400">
        <path d="M1 6h3.500L9 2v14l-4.500-4H1zM11.500 6.500c1 1.500 1 3.500 0 5M14 4c2.500 3 2.500 7 0 10M16.500 1.500c4 4.500 4 10.500 0 15" />
      </svg>
      <svg viewBox="0 0 20 16" className="ml-[9px] h-4 w-5" fill="none" stroke="#fff" strokeWidth="1.500">
        <path d="M7 3h8.500C16.800 3 17.500 3.700 17.500 5v7c0 1.300-.7 2-2 2h-11c-1.300 0-2-.7-2-2v-1M19.200 6.500v4" />
        <path d="M7 5.500h5v6H5z" fill="#fff" /><path d="M3.500 0 1 5.500h2L2 10l4-5.500H4.200L5.500 0z" fill="#fff" stroke="none" />
      </svg>
      <div className="ml-[18px] w-[81px] text-right text-[14px] leading-5 tracking-[0.35px] whitespace-nowrap text-white"><div>15:05</div><div>27-06-2023</div></div>
      <span className="ml-[9px] flex size-5 items-center justify-center rounded-full bg-[#4cc2ff] text-[13px] text-black">7</span>
    </div>
  );
}

export default function App() {
  return (
    <div className="h-[1080px] w-[1920px] overflow-hidden font-['Open_Sans','Noto_Sans',sans-serif]">
      <TabBar />
      <div className="h-[86px] bg-[#323443]">
        <Toolbar />
        <Bookmarks />
      </div>
      <Page />
      <Taskbar />
    </div>
  );
}
